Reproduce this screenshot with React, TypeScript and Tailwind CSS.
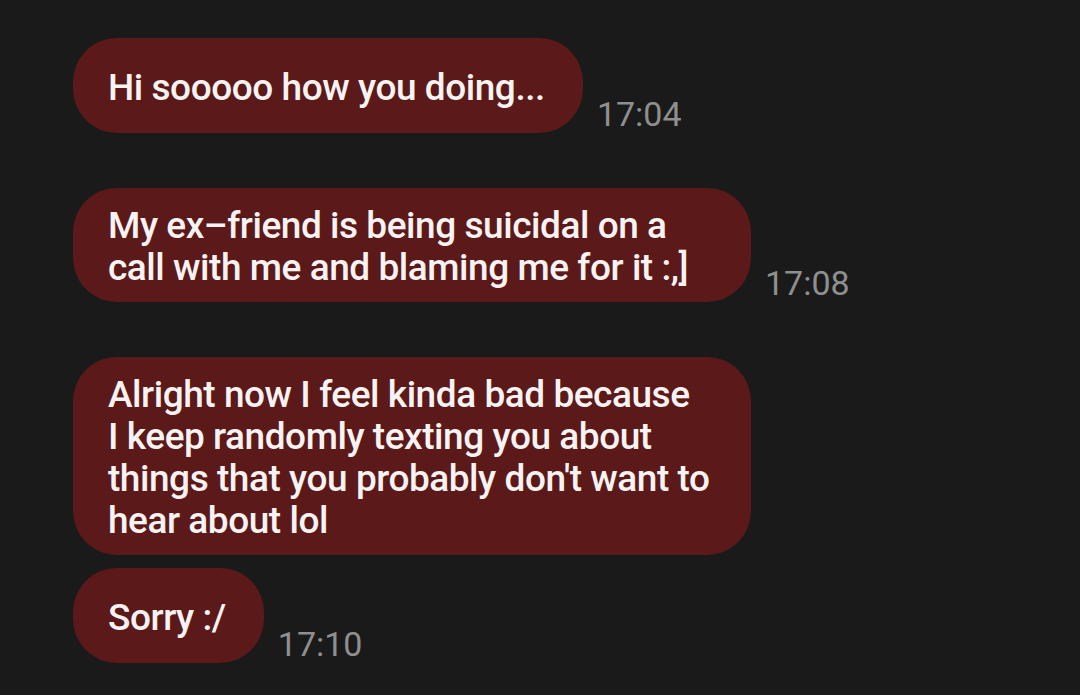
const messages = [
  { lines: ['Hi sooooo how you doing...'], time: '17:04', wide: false, gap: 'mt-0' },
  {
    lines: ['My ex\u2013friend is being suicidal on a', 'call with me and blaming me for it :,]'],
    time: '17:08',
    wide: true,
    gap: 'mt-[55px]',
  },
  {
    lines: [
      'Alright now I feel kinda bad because',
      'I keep randomly texting you about',
      "things that you probably don't want to",
      'hear about lol',
    ],
    time: '',
    wide: true,
    gap: 'mt-[55px]',
  },
  { lines: ['Sorry :/'], time: '17:10', wide: false, gap: 'mt-[13px]' },
];

function Bubble({ lines, wide }: { lines: string[]; wide: boolean }) {
  return (
    <div
      className={`${wide ? 'w-[678px] pr-[27px]' : 'w-fit pr-[38px]'} min-h-[95px] flex items-center rounded-[44px] bg-[#5c1919] pl-[35px] pt-[17px] pb-[13px]`}
    >
      <p className="text-[37px] leading-[42px] tracking-[-0.45px] font-medium text-[#f7f3f3] whitespace-nowrap">
        {lines.map((l, i) => (
          <span key={i} className="block">
            {l}
          </span>
        ))}
      </p>
    </div>
  );
}

export default function App() {
  return (
    <div
      className="w-[1080px] h-[695px] overflow-hidden bg-[#1a1a1a] pt-[38px] pl-[73px] flex flex-col"
      style={{ fontFamily: 'Roboto, "Noto Sans", sans-serif' }}
    >
      {messages.map((m, i) => (
        <div key={i} className={`flex items-end gap-[14px] ${m.gap}`}>
          <Bubble lines={m.lines} wide={m.wide} />
          {m.time && (
            <span className="text-[34px] leading-none text-[#8f8f8f] mb-[2px]">{m.time}</span>
          )}
        </div>
      ))}
    </div>
  );
}
